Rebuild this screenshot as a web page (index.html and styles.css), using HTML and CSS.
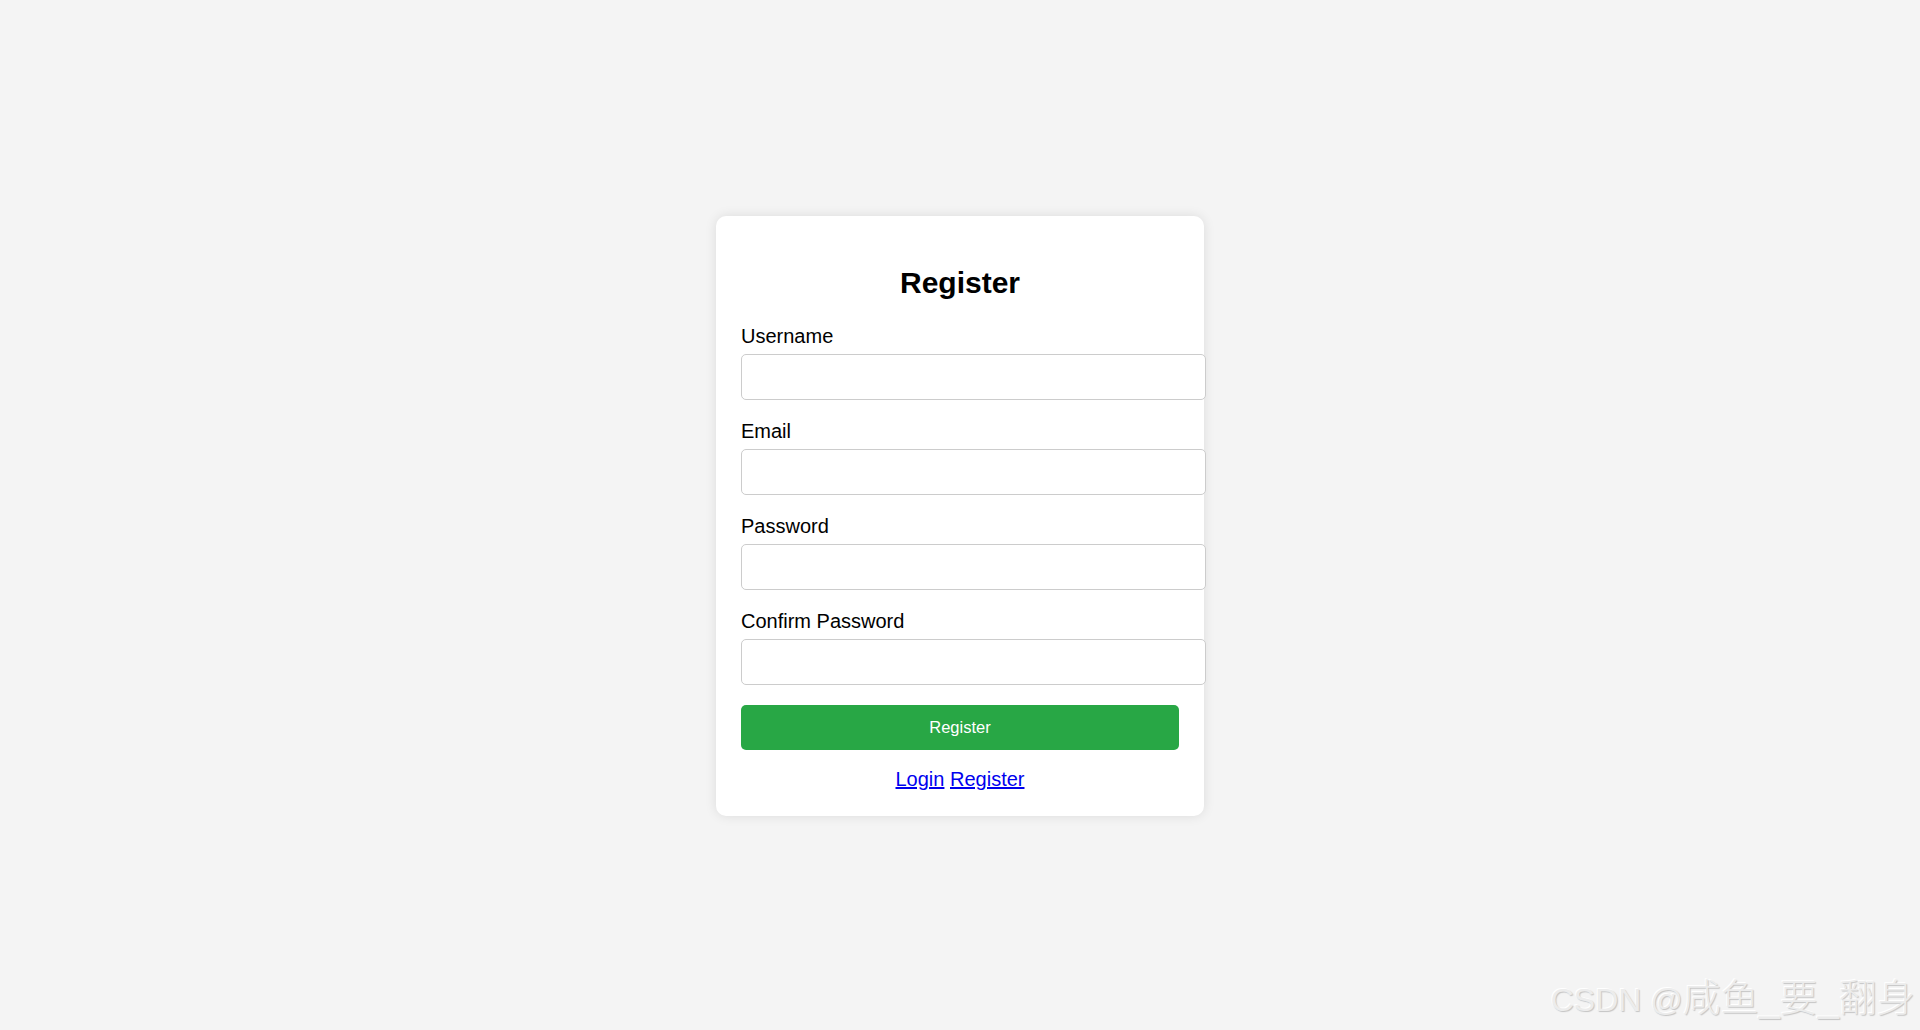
FILE: index.html
```html
<!DOCTYPE html>
<html lang="en">
<head>
<meta charset="utf-8">
<title>Register</title>
<link rel="stylesheet" href="styles.css">
</head>
<body>
<div class="container">
  <h2 class="title">Register</h2>
  <form class="form">
    <div class="form-group">
      <label for="username">Username</label>
      <input type="text" id="username">
    </div>
    <div class="form-group">
      <label for="email">Email</label>
      <input type="email" id="email">
    </div>
    <div class="form-group">
      <label for="password">Password</label>
      <input type="password" id="password">
    </div>
    <div class="form-group">
      <label for="confirm">Confirm Password</label>
      <input type="password" id="confirm">
    </div>
    <button type="button" class="btn">Register</button>
  </form>
  <div class="links"><a href="#">Login</a> <a href="#">Register</a></div>
</div>
<div class="watermark"><span class="wm-latin">CSDN @</span>咸鱼_要_翻身</div>
</body>
</html>
```
FILE: styles.css
```css
html, body {
  margin: 0;
  padding: 0;
}
body {
  background: #f4f4f4;
  font-family: "Liberation Sans", Arial, sans-serif;
  height: 100vh;
  display: flex;
  justify-content: center;
  align-items: center;
}
.container {
  width: 438px;
  padding: 25px;
  margin-top: 2px;
  background: #fff;
  border-radius: 10px;
  box-shadow: 0 0 12px rgba(0, 0, 0, 0.1);
}
.title {
  margin: 25px 0;
  font-size: 30px;
  line-height: 34px;
  font-weight: bold;
  text-align: center;
  color: #000;
}
.form-group {
  margin-bottom: 20px;
}
.form-group label {
  display: block;
  font-size: 20px;
  line-height: 23px;
  margin-bottom: 6px;
  color: #000;
}
.form-group input {
  display: block;
  box-sizing: border-box;
  width: 465px;
  height: 46px;
  padding: 12px;
  border: 1px solid #ccc;
  border-radius: 5px;
  font-size: 20px;
  background: #fff;
}
.btn {
  display: block;
  width: 438px;
  height: 45px;
  border: none;
  border-radius: 5px;
  background: #28a745;
  color: #fff;
  font-family: "Liberation Sans", Arial, sans-serif;
  font-size: 16.5px;
  padding: 0;
}
.links {
  margin-top: 18px;
  text-align: center;
  font-size: 20px;
  line-height: 23px;
}
.links a {
  color: #0000ee;
  text-decoration: underline;
}
.watermark {
  position: absolute;
  right: 5px;
  bottom: 10px;
  font-family: "Liberation Sans", "Noto Sans CJK SC", sans-serif;
  font-size: 38px;
  font-weight: 300;
  line-height: 40px;
  color: #ececec;
  text-shadow: 1px 1px 1px #c4c4c4, -1px -1px 0 #ffffff;
  white-space: nowrap;
  pointer-events: none;
}
.wm-latin {
  font-size: 32px;
}
```
